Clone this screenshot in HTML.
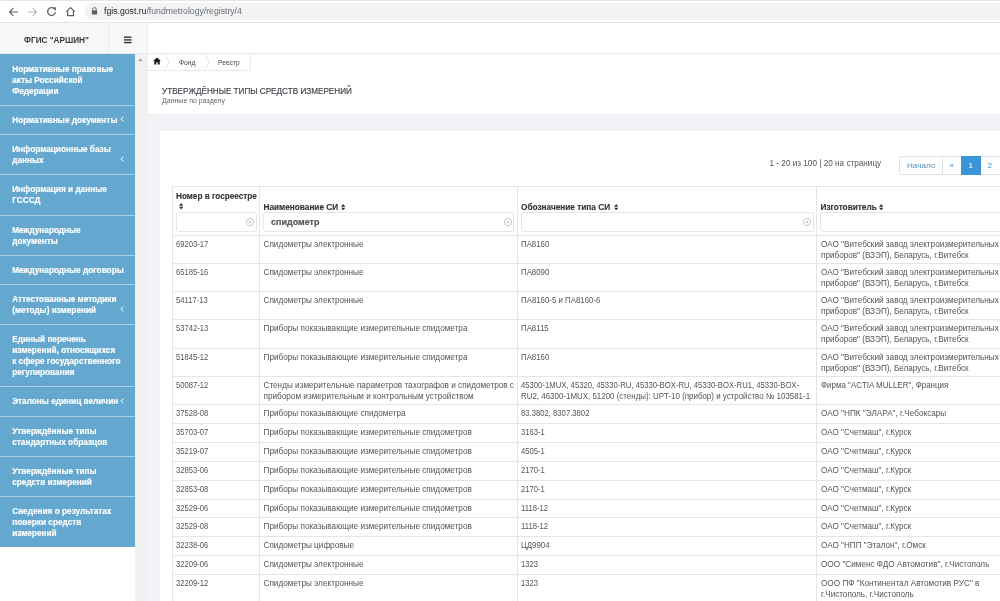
<!DOCTYPE html>
<html><head><meta charset="utf-8"><style>
*{box-sizing:border-box}
html,body{margin:0;padding:0}
body{width:1000px;height:601px;overflow:hidden;position:relative;background:#fff;font-family:"Liberation Sans",sans-serif;color:#333}
.a{position:absolute}
#tx{position:absolute;left:0;top:0;width:1000px;height:601px;will-change:transform}
#tx div{position:absolute;white-space:nowrap}
.hl{height:1px;background:#e4e5e7}
.vl{width:1px;background:#e4e5e7}
.inp{height:19.5px;border:1px solid #e5e6e9;border-radius:2.5px;background:#fff}
</style></head><body>
<div class="a" style="left:0;top:0;width:1000px;height:23px;background:#fff;border-bottom:1px solid #e2e4e7"></div>
<div class="a" style="left:0;top:0;width:1000px;height:1px;background:#e3e5e8"></div>
<svg class="a" style="left:8px;top:6.5px" width="11" height="10" viewBox="0 0 11 10"><path d="M10 5H1.8M5.3 1.2L1.5 5l3.8 3.8" fill="none" stroke="#5f6368" stroke-width="1.2"/></svg>
<svg class="a" style="left:27px;top:6.5px" width="11" height="10" viewBox="0 0 11 10"><path d="M1 5h8.2M5.7 1.2L9.5 5 5.7 8.8" fill="none" stroke="#b8babd" stroke-width="1.2"/></svg>
<svg class="a" style="left:46.3px;top:5.6px" width="11" height="11" viewBox="0 0 11 11"><path d="M8.6 3.2A3.9 3.9 0 1 0 9.4 6.2" fill="none" stroke="#5f6368" stroke-width="1.3"/><path d="M6.3 1.3h3.6v3.6z" fill="#5f6368"/></svg>
<svg class="a" style="left:65px;top:5.6px" width="11" height="11" viewBox="0 0 11 11"><path d="M1.3 5.6L5.5 1.6l4.2 4M2.6 4.6v5.1h5.8V4.6" fill="none" stroke="#5f6368" stroke-width="1.2"/></svg>
<div class="a" style="left:85px;top:3px;width:940px;height:16.5px;border-radius:8.5px;background:#f1f3f4"></div>
<svg class="a" style="left:91px;top:7px" width="7" height="8" viewBox="0 0 7 8"><path d="M1.7 3.4V2.4a1.8 1.8 0 0 1 3.6 0v1" fill="none" stroke="#5f6368" stroke-width="0.9"/><rect x="0.8" y="3.3" width="5.4" height="4.2" rx="0.6" fill="#5f6368"/></svg>
<div class="a" style="left:0;top:23px;width:147.5px;height:31px;background:#f7f8f9;border-right:1px solid #eceef0"></div>
<div class="a" style="left:108px;top:23px;width:1px;height:31px;background:#e8eaed"></div>
<div class="a" style="left:0;top:53px;width:1000px;height:1px;background:#e6e8eb"></div>
<svg class="a" style="left:124px;top:36px" width="8" height="8" viewBox="0 0 8 8"><rect x="0" y="0.5" width="7.5" height="1.4" fill="#333"/><rect x="0" y="3.2" width="7.5" height="1.4" fill="#333"/><rect x="0" y="5.9" width="7.5" height="1.4" fill="#333"/></svg>
<div class="a" style="left:147.5px;top:54px;width:852.5px;height:547px;background:#f1f3f6"></div>
<div class="a" style="left:147.5px;top:54px;width:852.5px;height:60.3px;background:#fff"></div>
<div class="a" style="left:147.5px;top:54px;width:103px;height:16.5px;border-right:1px solid #e6e8eb;border-bottom:1px solid #e6e8eb;background:#fff"></div>
<svg class="a" style="left:153px;top:57.2px" width="8" height="8" viewBox="0 0 8 8"><path d="M4 0.4L0.1 4.1h1.2v3.3h2V5.2h1.4v2.2h2V4.1h1.2z" fill="#1a1a1a"/></svg>
<svg class="a" style="left:164.1px;top:54px" width="6" height="17" viewBox="0 0 6 17"><path d="M0.5 0L5 8.3 0.5 17" fill="none" stroke="#dcdfe3" stroke-width="0.8"/></svg>
<svg class="a" style="left:204.1px;top:54px" width="6" height="17" viewBox="0 0 6 17"><path d="M0.5 0L5 8.3 0.5 17" fill="none" stroke="#dcdfe3" stroke-width="0.8"/></svg>
<div class="a" style="left:147.5px;top:114px;width:852.5px;height:1px;background:#e9ecef"></div>
<div class="a" style="left:160px;top:130.5px;width:860px;height:480px;background:#fff"></div>
<div class="a" style="left:899px;top:155.5px;width:120px;height:19px;border:1px solid #dde1e5;border-radius:2.5px;background:#fff"></div>
<div class="a" style="left:942px;top:155.5px;width:1px;height:19px;background:#dde1e5"></div>
<div class="a" style="left:961px;top:155.5px;width:20px;height:19px;background:#3a95d6"></div>
<div class="a hl" style="left:172px;top:186px;width:828px"></div>
<div class="a hl" style="left:172px;top:235px;width:828px"></div>
<div class="a hl" style="left:172px;top:263px;width:828px"></div>
<div class="a hl" style="left:172px;top:291px;width:828px"></div>
<div class="a hl" style="left:172px;top:319px;width:828px"></div>
<div class="a hl" style="left:172px;top:348px;width:828px"></div>
<div class="a hl" style="left:172px;top:376px;width:828px"></div>
<div class="a hl" style="left:172px;top:404px;width:828px"></div>
<div class="a hl" style="left:172px;top:423px;width:828px"></div>
<div class="a hl" style="left:172px;top:442px;width:828px"></div>
<div class="a hl" style="left:172px;top:461px;width:828px"></div>
<div class="a hl" style="left:172px;top:480px;width:828px"></div>
<div class="a hl" style="left:172px;top:499px;width:828px"></div>
<div class="a hl" style="left:172px;top:517px;width:828px"></div>
<div class="a hl" style="left:172px;top:536px;width:828px"></div>
<div class="a hl" style="left:172px;top:555px;width:828px"></div>
<div class="a hl" style="left:172px;top:574px;width:828px"></div>
<div class="a vl" style="left:172px;top:186px;height:415px"></div>
<div class="a vl" style="left:259px;top:186px;height:415px"></div>
<div class="a vl" style="left:517px;top:186px;height:415px"></div>
<div class="a vl" style="left:816px;top:186px;height:415px"></div>
<svg class="a" style="left:178.8px;top:203.4px" width="4.4" height="6.4" viewBox="0 0 4.4 6.4"><path d="M2.2 0L4.4 2.7H0zM2.2 6.4L4.4 3.7H0z" fill="#333"/></svg>
<svg class="a" style="left:340.5px;top:204px" width="4.4" height="6.4" viewBox="0 0 4.4 6.4"><path d="M2.2 0L4.4 2.7H0zM2.2 6.4L4.4 3.7H0z" fill="#333"/></svg>
<svg class="a" style="left:613.5px;top:204px" width="4.4" height="6.4" viewBox="0 0 4.4 6.4"><path d="M2.2 0L4.4 2.7H0zM2.2 6.4L4.4 3.7H0z" fill="#333"/></svg>
<svg class="a" style="left:879px;top:204px" width="4.4" height="6.4" viewBox="0 0 4.4 6.4"><path d="M2.2 0L4.4 2.7H0zM2.2 6.4L4.4 3.7H0z" fill="#333"/></svg>
<div class="a inp" style="left:175.6px;top:212.2px;width:81.2px"></div>
<div class="a inp" style="left:263.3px;top:212.2px;width:251.1px"></div>
<div class="a inp" style="left:521px;top:212.2px;width:293.0px"></div>
<div class="a inp" style="left:820px;top:212.2px;width:190.0px"></div>
<svg class="a" style="left:245.5px;top:218.3px" width="8" height="8" viewBox="0 0 8 8"><circle cx="4" cy="4" r="3.7" fill="none" stroke="#c4c4c4" stroke-width="0.9"/><path d="M2.6 2.6L5.4 5.4M5.4 2.6L2.6 5.4" stroke="#c4c4c4" stroke-width="0.9"/></svg>
<svg class="a" style="left:503.5px;top:218.3px" width="8" height="8" viewBox="0 0 8 8"><circle cx="4" cy="4" r="3.7" fill="none" stroke="#c4c4c4" stroke-width="0.9"/><path d="M2.6 2.6L5.4 5.4M5.4 2.6L2.6 5.4" stroke="#c4c4c4" stroke-width="0.9"/></svg>
<svg class="a" style="left:802.7px;top:218.3px" width="8" height="8" viewBox="0 0 8 8"><circle cx="4" cy="4" r="3.7" fill="none" stroke="#c4c4c4" stroke-width="0.9"/><path d="M2.6 2.6L5.4 5.4M5.4 2.6L2.6 5.4" stroke="#c4c4c4" stroke-width="0.9"/></svg>
<div class="a" style="left:0;top:54px;width:135px;height:493px;background:#64a7cf"></div>
<div class="a" style="left:0;top:105px;width:135px;height:1px;background:#a8cfe7"></div>
<div class="a" style="left:0;top:134px;width:135px;height:1px;background:#a8cfe7"></div>
<div class="a" style="left:0;top:174px;width:135px;height:1px;background:#a8cfe7"></div>
<div class="a" style="left:0;top:215px;width:135px;height:1px;background:#a8cfe7"></div>
<div class="a" style="left:0;top:255px;width:135px;height:1px;background:#a8cfe7"></div>
<div class="a" style="left:0;top:284px;width:135px;height:1px;background:#a8cfe7"></div>
<div class="a" style="left:0;top:324px;width:135px;height:1px;background:#a8cfe7"></div>
<div class="a" style="left:0;top:386px;width:135px;height:1px;background:#a8cfe7"></div>
<div class="a" style="left:0;top:416px;width:135px;height:1px;background:#a8cfe7"></div>
<div class="a" style="left:0;top:456px;width:135px;height:1px;background:#a8cfe7"></div>
<div class="a" style="left:0;top:496px;width:135px;height:1px;background:#a8cfe7"></div>
<svg class="a" style="left:119.8px;top:115.6px" width="4" height="6" viewBox="0 0 4 6"><path d="M3.3 0.6L0.9 3l2.4 2.4" fill="none" stroke="#fff" stroke-width="1"/></svg>
<svg class="a" style="left:119.8px;top:155.8px" width="4" height="6" viewBox="0 0 4 6"><path d="M3.3 0.6L0.9 3l2.4 2.4" fill="none" stroke="#fff" stroke-width="1"/></svg>
<svg class="a" style="left:119.8px;top:306px" width="4" height="6" viewBox="0 0 4 6"><path d="M3.3 0.6L0.9 3l2.4 2.4" fill="none" stroke="#fff" stroke-width="1"/></svg>
<svg class="a" style="left:119.8px;top:397.5px" width="4" height="6" viewBox="0 0 4 6"><path d="M3.3 0.6L0.9 3l2.4 2.4" fill="none" stroke="#fff" stroke-width="1"/></svg>
<div class="a" style="left:135px;top:54px;width:12.5px;height:547px;background:#f1f1f1"></div>
<svg class="a" style="left:138px;top:58px" width="5" height="3.5" viewBox="0 0 5 3.5"><path d="M2.5 0.3L4.8 3.2H0.2z" fill="#a3a3a3"/></svg>
<div id="tx">
<div style="left:104px;top:6.00px;font-size:8.68px;line-height:10px;color:#6b6e72;"><span style="color:#222">fgis.gost.ru</span>/fundmetrology/registry/4</div>
<div style="left:24px;top:36.00px;font-size:8.2px;line-height:10px;color:#3a3a3a;font-weight:bold;">ФГИС "АРШИН"</div>
<div style="left:179px;top:58.00px;font-size:6.7px;line-height:10px;color:#444;">Фонд</div>
<div style="left:218px;top:58.00px;font-size:6.7px;line-height:10px;color:#444;">Реестр</div>
<div style="left:162px;top:87.00px;font-size:8.16px;line-height:10px;color:#3b3f45;-webkit-text-stroke:0.15px #3b3f45;">УТВЕРЖДЁННЫЕ ТИПЫ СРЕДСТВ ИЗМЕРЕНИЙ</div>
<div style="left:162px;top:96.00px;font-size:7px;line-height:10px;color:#666;">Данные по разделу</div>
<div style="left:769.5px;top:159.00px;font-size:8.2px;line-height:10px;color:#555;">1 - 20 из 100 | 20 на страницу</div>
<div style="left:907px;top:161.00px;font-size:8.1px;line-height:10px;color:#4f8cc4;">Начало</div>
<div style="left:949.5px;top:161.00px;font-size:8.1px;line-height:10px;color:#4f8cc4;">«</div>
<div style="left:968.5px;top:161.00px;font-size:8.1px;line-height:10px;color:#fff;">1</div>
<div style="left:987.5px;top:161.00px;font-size:8.1px;line-height:10px;color:#4f8cc4;">2</div>
<div style="left:176px;top:192.00px;font-size:8.2px;line-height:10px;color:#333;font-weight:bold;-webkit-text-stroke:0.12px #333;">Номер в госреестре</div>
<div style="left:263.5px;top:203.00px;font-size:8.25px;line-height:10px;color:#333;font-weight:bold;-webkit-text-stroke:0.12px #333;">Наименование СИ</div>
<div style="left:521px;top:203.00px;font-size:8.25px;line-height:10px;color:#333;font-weight:bold;-webkit-text-stroke:0.12px #333;">Обозначение типа СИ</div>
<div style="left:820.5px;top:203.00px;font-size:8.25px;line-height:10px;color:#333;font-weight:bold;-webkit-text-stroke:0.12px #333;">Изготовитель</div>
<div style="left:271px;top:217.00px;font-size:9px;line-height:10px;color:#555;font-weight:bold;-webkit-text-stroke:0.2px #555;">спидометр</div>
<div style="left:176px;top:240.00px;font-size:8.2px;line-height:10px;color:#555;transform:scaleX(0.935);transform-origin:0 0;">69203-17</div>
<div style="left:263.5px;top:240.00px;font-size:8.2px;line-height:10px;color:#555;">Спидометры электронные</div>
<div style="left:521px;top:240.00px;font-size:8.2px;line-height:10px;color:#555;transform:scaleX(0.957);transform-origin:0 0;">ПА8160</div>
<div style="left:821px;top:240.00px;font-size:8.2px;line-height:10px;color:#555;">ОАО "Витебский завод электроизмерительных</div>
<div style="left:821px;top:251.00px;font-size:8.2px;line-height:10px;color:#555;transform:scaleX(0.995);transform-origin:0 0;">приборов" (ВЗЭП), Беларусь, г.Витебск</div>
<div style="left:176px;top:268.00px;font-size:8.2px;line-height:10px;color:#555;transform:scaleX(0.935);transform-origin:0 0;">65185-16</div>
<div style="left:263.5px;top:268.00px;font-size:8.2px;line-height:10px;color:#555;">Спидометры электронные</div>
<div style="left:521px;top:268.00px;font-size:8.2px;line-height:10px;color:#555;transform:scaleX(0.957);transform-origin:0 0;">ПА8090</div>
<div style="left:821px;top:268.00px;font-size:8.2px;line-height:10px;color:#555;">ОАО "Витебский завод электроизмерительных</div>
<div style="left:821px;top:279.00px;font-size:8.2px;line-height:10px;color:#555;transform:scaleX(0.995);transform-origin:0 0;">приборов" (ВЗЭП), Беларусь, г.Витебск</div>
<div style="left:176px;top:296.00px;font-size:8.2px;line-height:10px;color:#555;transform:scaleX(0.935);transform-origin:0 0;">54117-13</div>
<div style="left:263.5px;top:296.00px;font-size:8.2px;line-height:10px;color:#555;">Спидометры электронные</div>
<div style="left:521px;top:296.00px;font-size:8.2px;line-height:10px;color:#555;transform:scaleX(0.959);transform-origin:0 0;">ПА8160-5 и ПА8160-6</div>
<div style="left:821px;top:296.00px;font-size:8.2px;line-height:10px;color:#555;">ОАО "Витебский завод электроизмерительных</div>
<div style="left:821px;top:307.00px;font-size:8.2px;line-height:10px;color:#555;transform:scaleX(0.995);transform-origin:0 0;">приборов" (ВЗЭП), Беларусь, г.Витебск</div>
<div style="left:176px;top:324.00px;font-size:8.2px;line-height:10px;color:#555;transform:scaleX(0.935);transform-origin:0 0;">53742-13</div>
<div style="left:263.5px;top:324.00px;font-size:8.2px;line-height:10px;color:#555;">Приборы показывающие измерительные спидометра</div>
<div style="left:521px;top:324.00px;font-size:8.2px;line-height:10px;color:#555;transform:scaleX(0.957);transform-origin:0 0;">ПА8115</div>
<div style="left:821px;top:324.00px;font-size:8.2px;line-height:10px;color:#555;">ОАО "Витебский завод электроизмерительных</div>
<div style="left:821px;top:335.00px;font-size:8.2px;line-height:10px;color:#555;transform:scaleX(0.995);transform-origin:0 0;">приборов" (ВЗЭП), Беларусь, г.Витебск</div>
<div style="left:176px;top:353.00px;font-size:8.2px;line-height:10px;color:#555;transform:scaleX(0.935);transform-origin:0 0;">51845-12</div>
<div style="left:263.5px;top:353.00px;font-size:8.2px;line-height:10px;color:#555;">Приборы показывающие измерительные спидометра</div>
<div style="left:521px;top:353.00px;font-size:8.2px;line-height:10px;color:#555;transform:scaleX(0.957);transform-origin:0 0;">ПА8160</div>
<div style="left:821px;top:353.00px;font-size:8.2px;line-height:10px;color:#555;">ОАО "Витебский завод электроизмерительных</div>
<div style="left:821px;top:364.00px;font-size:8.2px;line-height:10px;color:#555;transform:scaleX(0.995);transform-origin:0 0;">приборов" (ВЗЭП), Беларусь, г.Витебск</div>
<div style="left:176px;top:381.00px;font-size:8.2px;line-height:10px;color:#555;transform:scaleX(0.935);transform-origin:0 0;">50087-12</div>
<div style="left:263.5px;top:381.00px;font-size:8.2px;line-height:10px;color:#555;">Стенды измерительные параметров тахографов и спидометров с</div>
<div style="left:263.5px;top:392.00px;font-size:8.2px;line-height:10px;color:#555;">прибором измерительным и контрольным устройством</div>
<div style="left:521px;top:381.00px;font-size:8.2px;line-height:10px;color:#555;transform:scaleX(0.940);transform-origin:0 0;">45300-1MUX, 45320, 45330-RU, 45330-BOX-RU, 45330-BOX-RU1, 45330-BOX-</div>
<div style="left:521px;top:392.00px;font-size:8.2px;line-height:10px;color:#555;transform:scaleX(0.969);transform-origin:0 0;">RU2, 46300-1MUX, 51200 (стенды): UPT-10 (прибор) и устройство № 103581-1</div>
<div style="left:821px;top:381.00px;font-size:8.2px;line-height:10px;color:#555;transform:scaleX(0.973);transform-origin:0 0;">Фирма "ACTIA MULLER", Франция</div>
<div style="left:176px;top:409.00px;font-size:8.2px;line-height:10px;color:#555;transform:scaleX(0.935);transform-origin:0 0;">37528-08</div>
<div style="left:263.5px;top:409.00px;font-size:8.2px;line-height:10px;color:#555;">Приборы показывающие спидометра</div>
<div style="left:521px;top:409.00px;font-size:8.2px;line-height:10px;color:#555;transform:scaleX(0.939);transform-origin:0 0;">83.3802, 8307.3802</div>
<div style="left:821px;top:409.00px;font-size:8.2px;line-height:10px;color:#555;">ОАО "НПК "ЭЛАРА", г.Чебоксары</div>
<div style="left:176px;top:428.00px;font-size:8.2px;line-height:10px;color:#555;transform:scaleX(0.935);transform-origin:0 0;">35703-07</div>
<div style="left:263.5px;top:428.00px;font-size:8.2px;line-height:10px;color:#555;">Приборы показывающие измерительные спидометров</div>
<div style="left:521px;top:428.00px;font-size:8.2px;line-height:10px;color:#555;transform:scaleX(0.935);transform-origin:0 0;">3163-1</div>
<div style="left:821px;top:428.00px;font-size:8.2px;line-height:10px;color:#555;transform:scaleX(0.994);transform-origin:0 0;">ОАО "Счетмаш", г.Курск</div>
<div style="left:176px;top:447.00px;font-size:8.2px;line-height:10px;color:#555;transform:scaleX(0.935);transform-origin:0 0;">35219-07</div>
<div style="left:263.5px;top:447.00px;font-size:8.2px;line-height:10px;color:#555;">Приборы показывающие измерительные спидометров</div>
<div style="left:521px;top:447.00px;font-size:8.2px;line-height:10px;color:#555;transform:scaleX(0.935);transform-origin:0 0;">4505-1</div>
<div style="left:821px;top:447.00px;font-size:8.2px;line-height:10px;color:#555;transform:scaleX(0.994);transform-origin:0 0;">ОАО "Счетмаш", г.Курск</div>
<div style="left:176px;top:466.00px;font-size:8.2px;line-height:10px;color:#555;transform:scaleX(0.935);transform-origin:0 0;">32853-06</div>
<div style="left:263.5px;top:466.00px;font-size:8.2px;line-height:10px;color:#555;">Приборы показывающие измерительные спидометров</div>
<div style="left:521px;top:466.00px;font-size:8.2px;line-height:10px;color:#555;transform:scaleX(0.935);transform-origin:0 0;">2170-1</div>
<div style="left:821px;top:466.00px;font-size:8.2px;line-height:10px;color:#555;transform:scaleX(0.994);transform-origin:0 0;">ОАО "Счетмаш", г.Курск</div>
<div style="left:176px;top:485.00px;font-size:8.2px;line-height:10px;color:#555;transform:scaleX(0.935);transform-origin:0 0;">32853-08</div>
<div style="left:263.5px;top:485.00px;font-size:8.2px;line-height:10px;color:#555;">Приборы показывающие измерительные спидометров</div>
<div style="left:521px;top:485.00px;font-size:8.2px;line-height:10px;color:#555;transform:scaleX(0.935);transform-origin:0 0;">2170-1</div>
<div style="left:821px;top:485.00px;font-size:8.2px;line-height:10px;color:#555;transform:scaleX(0.994);transform-origin:0 0;">ОАО "Счетмаш", г.Курск</div>
<div style="left:176px;top:504.00px;font-size:8.2px;line-height:10px;color:#555;transform:scaleX(0.935);transform-origin:0 0;">32529-06</div>
<div style="left:263.5px;top:504.00px;font-size:8.2px;line-height:10px;color:#555;">Приборы показывающие измерительные спидометров</div>
<div style="left:521px;top:504.00px;font-size:8.2px;line-height:10px;color:#555;transform:scaleX(0.935);transform-origin:0 0;">1118-12</div>
<div style="left:821px;top:504.00px;font-size:8.2px;line-height:10px;color:#555;transform:scaleX(0.994);transform-origin:0 0;">ОАО "Счетмаш", г.Курск</div>
<div style="left:176px;top:522.00px;font-size:8.2px;line-height:10px;color:#555;transform:scaleX(0.935);transform-origin:0 0;">32529-08</div>
<div style="left:263.5px;top:522.00px;font-size:8.2px;line-height:10px;color:#555;">Приборы показывающие измерительные спидометров</div>
<div style="left:521px;top:522.00px;font-size:8.2px;line-height:10px;color:#555;transform:scaleX(0.935);transform-origin:0 0;">1118-12</div>
<div style="left:821px;top:522.00px;font-size:8.2px;line-height:10px;color:#555;transform:scaleX(0.994);transform-origin:0 0;">ОАО "Счетмаш", г.Курск</div>
<div style="left:176px;top:541.00px;font-size:8.2px;line-height:10px;color:#555;transform:scaleX(0.935);transform-origin:0 0;">32238-06</div>
<div style="left:263.5px;top:541.00px;font-size:8.2px;line-height:10px;color:#555;">Спидометры цифровые</div>
<div style="left:521px;top:541.00px;font-size:8.2px;line-height:10px;color:#555;transform:scaleX(0.957);transform-origin:0 0;">ЦД9904</div>
<div style="left:821px;top:541.00px;font-size:8.2px;line-height:10px;color:#555;transform:scaleX(0.995);transform-origin:0 0;">ОАО "НПП "Эталон", г.Омск</div>
<div style="left:176px;top:560.00px;font-size:8.2px;line-height:10px;color:#555;transform:scaleX(0.935);transform-origin:0 0;">32209-06</div>
<div style="left:263.5px;top:560.00px;font-size:8.2px;line-height:10px;color:#555;">Спидометры электронные</div>
<div style="left:521px;top:560.00px;font-size:8.2px;line-height:10px;color:#555;transform:scaleX(0.935);transform-origin:0 0;">1323</div>
<div style="left:821px;top:560.00px;font-size:8.2px;line-height:10px;color:#555;">ООО "Сименс ФДО Автомотив", г.Чистополь</div>
<div style="left:176px;top:579.00px;font-size:8.2px;line-height:10px;color:#555;transform:scaleX(0.935);transform-origin:0 0;">32209-12</div>
<div style="left:263.5px;top:579.00px;font-size:8.2px;line-height:10px;color:#555;">Спидометры электронные</div>
<div style="left:521px;top:579.00px;font-size:8.2px;line-height:10px;color:#555;transform:scaleX(0.935);transform-origin:0 0;">1323</div>
<div style="left:821px;top:579.00px;font-size:8.2px;line-height:10px;color:#555;">ООО ПФ "Континентал Автомотив РУС" в</div>
<div style="left:821px;top:590.00px;font-size:8.2px;line-height:10px;color:#555;transform:scaleX(0.992);transform-origin:0 0;">г.Чистополь, г.Чистополь</div>
<div style="left:12.2px;top:65.00px;font-size:8.26px;line-height:10px;color:#fff;font-weight:bold;-webkit-text-stroke:0.15px #fff;">Нормативные правовые</div>
<div style="left:12.2px;top:76.00px;font-size:8.26px;line-height:10px;color:#fff;font-weight:bold;-webkit-text-stroke:0.15px #fff;">акты Российской</div>
<div style="left:12.2px;top:87.00px;font-size:8.26px;line-height:10px;color:#fff;font-weight:bold;-webkit-text-stroke:0.15px #fff;">Федерации</div>
<div style="left:12.2px;top:116.00px;font-size:8.26px;line-height:10px;color:#fff;font-weight:bold;-webkit-text-stroke:0.15px #fff;">Нормативные документы</div>
<div style="left:12.2px;top:145.00px;font-size:8.26px;line-height:10px;color:#fff;font-weight:bold;-webkit-text-stroke:0.15px #fff;">Информационные базы</div>
<div style="left:12.2px;top:156.00px;font-size:8.26px;line-height:10px;color:#fff;font-weight:bold;-webkit-text-stroke:0.15px #fff;">данных</div>
<div style="left:12.2px;top:185.00px;font-size:8.26px;line-height:10px;color:#fff;font-weight:bold;-webkit-text-stroke:0.15px #fff;">Информация и данные</div>
<div style="left:12.2px;top:196.00px;font-size:8.26px;line-height:10px;color:#fff;font-weight:bold;-webkit-text-stroke:0.15px #fff;">ГСССД</div>
<div style="left:12.2px;top:226.00px;font-size:8.26px;line-height:10px;color:#fff;font-weight:bold;-webkit-text-stroke:0.15px #fff;">Международные</div>
<div style="left:12.2px;top:237.00px;font-size:8.26px;line-height:10px;color:#fff;font-weight:bold;-webkit-text-stroke:0.15px #fff;">документы</div>
<div style="left:12.2px;top:266.00px;font-size:8.26px;line-height:10px;color:#fff;font-weight:bold;-webkit-text-stroke:0.15px #fff;">Международные договоры</div>
<div style="left:12.2px;top:295.00px;font-size:8.26px;line-height:10px;color:#fff;font-weight:bold;-webkit-text-stroke:0.15px #fff;">Аттестованные методики</div>
<div style="left:12.2px;top:306.00px;font-size:8.26px;line-height:10px;color:#fff;font-weight:bold;-webkit-text-stroke:0.15px #fff;">(методы) измерений</div>
<div style="left:12.2px;top:335.00px;font-size:8.26px;line-height:10px;color:#fff;font-weight:bold;-webkit-text-stroke:0.15px #fff;">Единый перечень</div>
<div style="left:12.2px;top:346.00px;font-size:8.26px;line-height:10px;color:#fff;font-weight:bold;-webkit-text-stroke:0.15px #fff;">измерений, относящихся</div>
<div style="left:12.2px;top:357.00px;font-size:8.26px;line-height:10px;color:#fff;font-weight:bold;-webkit-text-stroke:0.15px #fff;">к сфере государственного</div>
<div style="left:12.2px;top:368.00px;font-size:8.26px;line-height:10px;color:#fff;font-weight:bold;-webkit-text-stroke:0.15px #fff;">регулирования</div>
<div style="left:12.2px;top:397.00px;font-size:8.26px;line-height:10px;color:#fff;font-weight:bold;-webkit-text-stroke:0.15px #fff;">Эталоны единиц величин</div>
<div style="left:12.2px;top:427.00px;font-size:8.26px;line-height:10px;color:#fff;font-weight:bold;-webkit-text-stroke:0.15px #fff;">Утверждённые типы</div>
<div style="left:12.2px;top:438.00px;font-size:8.26px;line-height:10px;color:#fff;font-weight:bold;-webkit-text-stroke:0.15px #fff;">стандартных образцов</div>
<div style="left:12.2px;top:467.00px;font-size:8.26px;line-height:10px;color:#fff;font-weight:bold;-webkit-text-stroke:0.15px #fff;">Утверждённые типы</div>
<div style="left:12.2px;top:478.00px;font-size:8.26px;line-height:10px;color:#fff;font-weight:bold;-webkit-text-stroke:0.15px #fff;">средств измерений</div>
<div style="left:12.2px;top:507.00px;font-size:8.26px;line-height:10px;color:#fff;font-weight:bold;-webkit-text-stroke:0.15px #fff;">Сведения о результатах</div>
<div style="left:12.2px;top:518.00px;font-size:8.26px;line-height:10px;color:#fff;font-weight:bold;-webkit-text-stroke:0.15px #fff;">поверки средств</div>
<div style="left:12.2px;top:529.00px;font-size:8.26px;line-height:10px;color:#fff;font-weight:bold;-webkit-text-stroke:0.15px #fff;">измерений</div>
</div>
</body></html>
